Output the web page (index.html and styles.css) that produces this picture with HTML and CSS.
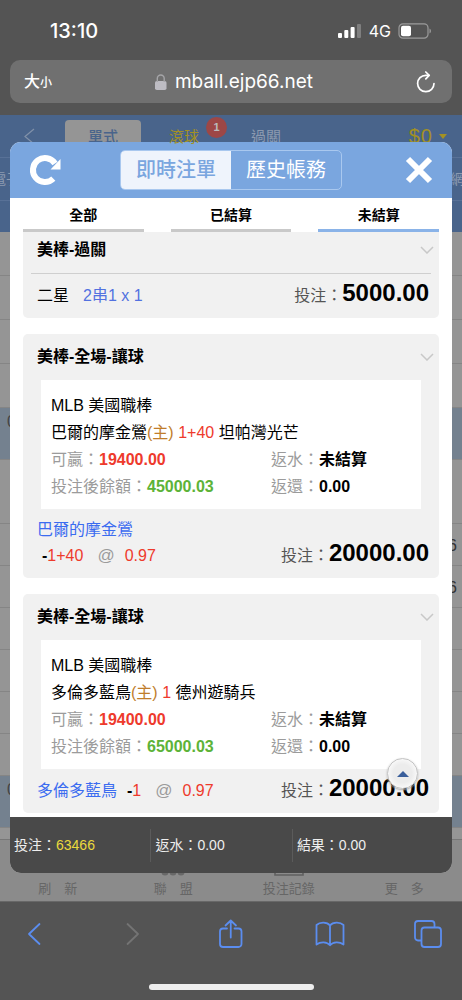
FILE: index.html
```html
<!DOCTYPE html>
<html lang="zh-Hant">
<head>
<meta charset="utf-8">
<meta name="viewport" content="width=device-width, initial-scale=1">
<title>即時注單</title>
<link rel="stylesheet" href="styles.css">
</head>
<body>
<header class="browser-top">
  <div class="status">
    <span class="clock">13:10</span>
    <div class="status-right">
      <svg width="24" height="16" viewBox="0 0 24 16" fill="#fff" aria-hidden="true"><rect x="0" y="10" width="4" height="5" rx="1"/><rect x="6.300" y="7" width="4" height="8" rx="1"/><rect x="12.600" y="4" width="4" height="11" rx="1"/><rect x="19" y="1" width="4" height="14" rx="1" opacity=".25"/></svg>
      <span class="network">4G</span>
      <svg width="34" height="16" viewBox="0 0 34 16" aria-hidden="true"><rect x="1" y=".8" width="29" height="14.400" rx="4" fill="none" stroke="#9b9b9b" stroke-width="1.200"/><rect x="3" y="2.800" width="10" height="10.400" rx="2" fill="#fff"/><path d="M31.500 5.500c2 1 2 4 0 5z" fill="#9b9b9b"/></svg>
    </div>
  </div>
  <div class="address">
    <button class="text-size" type="button">大<small>小</small></button>
    <div class="url">
      <svg width="12" height="16" viewBox="0 0 12 16" aria-hidden="true"><rect x="0" y="7" width="11.500" height="9" rx="1.800" fill="#bdbcc3"/><path d="M2.300 8V4.500a3.450 3.450 0 0 1 6.900 0V8" fill="none" stroke="#a5a5a8" stroke-width="1.400"/></svg>
      <span>mball.ejp66.net</span>
    </div>
    <button class="reload" type="button" aria-label="重新載入"><svg width="20" height="22" viewBox="0 0 20 22" fill="none" stroke="#fff" stroke-width="1.700" stroke-linecap="round" stroke-linejoin="round"><path d="M18 12.500a8.200 8.200 0 1 1-8.200-8.200h3"/><path d="M9.800 1l3.400 3.300-3.400 3.500"/></svg></button>
  </div>
</header>

<main class="stage">
  <div class="app" aria-hidden="true">
    <div class="app-nav">
      <svg width="11" height="17" viewBox="0 0 11 17" fill="none" stroke="#8191a9" stroke-width="1.200"><path d="M10 1L1 8.500l9 7.500"/></svg>
      <span class="app-tab on">單式</span>
      <span class="app-tab live">滾球<b class="badge">1</b></span>
      <span class="app-tab">過關</span>
      <span class="balance">$0<svg width="8" height="5" viewBox="0 0 8 5"><path d="M0 0h8L4 5z" fill="#a39123"/></svg></span>
    </div>
    <div class="app-sports"><span>電子</span><span>網球</span></div>
    <div class="app-strip"></div>
    <div class="rows">
      <div></div><div></div><div></div><div></div>
      <div class="blue"><span>0</span></div>
      <div class="tall"></div>
      <div class="odds"><span>6</span></div><div class="odds"><span>6</span></div><div></div><div></div><div></div><div></div>
      <div class="blue"><span>0</span></div>
    </div>
    <div class="app-foot">
      <span>刷　新</span>
      <span><svg width="24" height="8" viewBox="0 0 24 8" fill="#686868"><circle cx="4" cy="4" r="3.500"/><circle cx="12" cy="4" r="3.500"/><circle cx="20" cy="4" r="3.500"/></svg>聯　盟</span>
      <span><svg width="30" height="8" viewBox="0 0 30 8" fill="none" stroke="#606060" stroke-width="1.600"><path d="M1 0v7h28V0"/></svg>投注記錄</span>
      <span>更　多</span>
    </div>
  </div>

  <section class="modal" role="dialog" aria-label="即時注單">
    <div class="modal-head">
      <button type="button" aria-label="重新整理"><svg width="32" height="32" viewBox="0 0 32 32"><path d="M24.300 24.700A12 12 0 1 1 26 9.500" fill="none" stroke="#fff" stroke-width="6"/><path d="M31.500 5V15.500H21.500z" fill="#fff"/></svg></button>
      <div class="segment"><button class="on" type="button">即時注單</button><button type="button">歷史帳務</button></div>
      <button type="button" aria-label="關閉"><svg width="28" height="28" viewBox="0 0 28 28" fill="none" stroke="#fff" stroke-width="6"><path d="M3 3l22 22M25 3L3 25"/></svg></button>
    </div>
    <div class="filters">
      <button type="button">全部</button><button type="button">已結算</button><button class="on" type="button">未結算</button>
    </div>
    <div class="list">
      <article class="card first">
        <h2>美棒-過關<svg class="chev" width="14" height="8" viewBox="0 0 14 8"><path d="M1 1l6 6 6-6"/></svg></h2>
        <div class="summary ruled">
          <div class="picks"><span>二星</span><span class="parlay">2串1 x 1</span></div>
          <div class="stake">投注：<strong>5000.00</strong></div>
        </div>
      </article>
      <article class="card">
        <h2>美棒-全場-讓球<svg class="chev" width="14" height="8" viewBox="0 0 14 8"><path d="M1 1l6 6 6-6"/></svg></h2>
        <div class="detail">
          <p>MLB 美國職棒</p>
          <p>巴爾的摩金鶯<span class="home">(主)</span> <span class="red">1+40</span> 坦帕灣光芒</p>
          <div class="pair"><p>可贏：<b class="red">19400.00</b></p><p>返水：<b>未結算</b></p></div>
          <div class="pair"><p>投注後餘額：<b class="green">45000.03</b></p><p>返還：<b>0.00</b></p></div>
        </div>
        <div class="summary two-line">
          <div class="picks"><span class="team">巴爾的摩金鶯</span><span class="line"><b>-</b>1+40</span><span class="at">@</span><span class="red">0.97</span></div>
          <div class="stake">投注：<strong>20000.00</strong></div>
        </div>
      </article>
      <article class="card">
        <h2>美棒-全場-讓球<svg class="chev" width="14" height="8" viewBox="0 0 14 8"><path d="M1 1l6 6 6-6"/></svg></h2>
        <div class="detail">
          <p>MLB 美國職棒</p>
          <p>多倫多藍鳥<span class="home">(主)</span> <span class="red">1</span> 德州遊騎兵</p>
          <div class="pair"><p>可贏：<b class="red">19400.00</b></p><p>返水：<b>未結算</b></p></div>
          <div class="pair"><p>投注後餘額：<b class="green">65000.03</b></p><p>返還：<b>0.00</b></p></div>
        </div>
        <div class="summary">
          <div class="picks"><span class="team">多倫多藍鳥</span><span class="line"><b>-</b>1</span><span class="at">@</span><span class="red">0.97</span></div>
          <div class="stake">投注：<strong>20000.00</strong></div>
        </div>
      </article>
      <button class="to-top" type="button" aria-label="回頂端"><svg width="12" height="6" viewBox="0 0 12 6"><path d="M6 0l6 6H0z" fill="#3a5f9b"/></svg></button>
    </div>
    <footer class="totals">
      <div>投注：<span class="yellow">63466</span></div><div>返水：0.00</div><div>結果：0.00</div>
    </footer>
  </section>
</main>

<footer class="browser-bottom">
  <nav class="tools">
    <button type="button" aria-label="上一頁"><svg width="14" height="24" viewBox="0 0 14 24"><path d="M12.500 2L2 12l10.500 10"/></svg></button>
    <button class="off" type="button" aria-label="下一頁" disabled><svg width="14" height="24" viewBox="0 0 14 24"><path d="M1.500 2L12 12 1.500 22"/></svg></button>
    <button type="button" aria-label="分享"><svg width="24" height="30" viewBox="0 0 24 30"><path d="M8 9.500H4a3 3 0 0 0-3 3V25a3 3 0 0 0 3 3h15.500a3 3 0 0 0 3-3V12.500a3 3 0 0 0-3-3h-4M11.750 18.500V1.500M6.500 6.500l5.250-5 5.250 5"/></svg></button>
    <button type="button" aria-label="書籤"><svg width="30" height="26" viewBox="0 0 30 26"><path d="M15 4.500C12 .8 5 .8 1.500 4v19.500c4-3 10.500-3 13.500.800 3-3.800 9.500-3.800 13.500-.8V4C25 .8 18 .8 15 4.500zV24"/></svg></button>
    <button type="button" aria-label="分頁"><svg width="28" height="28" viewBox="0 0 28 28"><rect x="7.500" y="7.500" width="19.500" height="19.500" rx="3"/><path d="M7 20.500H4a3 3 0 0 1-3-3V4a3 3 0 0 1 3-3h13.500a3 3 0 0 1 3 3v3"/></svg></button>
  </nav>
  <div class="home-bar"></div>
</footer>
</body>
</html>
```
FILE: styles.css
```css
* { box-sizing: border-box; }
body {
  margin: 0;
  min-height: 100vh;
  display: flex;
  flex-direction: column;
  background: #545454;
  color: #000;
  font: 16px/27px "Liberation Sans", "Noto Sans CJK TC", sans-serif;
}
h2, p { margin: 0; }
button { margin: 0; padding: 0; border: 0; background: none; font: inherit; color: inherit; }
svg { display: block; flex: none; }

.browser-top { padding: 16px 10px 12px; color: #fff; font-family: Inter, "Noto Sans CJK TC", sans-serif; }
.status { display: flex; justify-content: space-between; align-items: center; height: 30px; padding: 0 20px 0 40px; }
.clock { font-size: 20px; font-weight: 500; }
.status-right { display: flex; align-items: center; gap: 7px; }
.network { font-size: 16px; }
.address { display: grid; grid-template-columns: 1fr auto 1fr; align-items: center; height: 43px; margin-top: 14px; padding: 0 16px 0 14px; border-radius: 10px; background: #707070; }
.text-size { justify-self: start; font-size: 16px; font-weight: 500; white-space: nowrap; }
.text-size small { font-size: 12px; }
.url { display: flex; align-items: center; gap: 8px; padding-left: 8px; font-size: 19px; }
.reload { justify-self: end; }

.stage { display: grid; flex: 1 0 auto; overflow: hidden; }
.app, .modal { grid-area: 1 / 1; min-width: 0; }
.app { display: flex; flex-direction: column; background: #959595; }
.app-nav { display: flex; align-items: center; height: 43px; padding: 0 15px 0 24px; background: #49648b; border-bottom: 1px solid #587197; color: #8c9ab0; font-size: 15px; }
.app-tab { padding: 0 26px; }
.app-tab.on { margin: 0 2px 0 30px; padding: 3px 23px; border-radius: 4px; background: #959595; color: #49648b; font-weight: 500; }
.app-tab.live { position: relative; color: #a39123; }
.badge { position: absolute; right: -2px; top: -6px; width: 21px; height: 21px; border-radius: 50%; background: #9d4746; color: #bbb; font-size: 11px; line-height: 21px; text-align: center; }
.balance { display: flex; align-items: center; gap: 6px; margin-left: auto; color: #a39123; font-size: 20px; letter-spacing: 1px; }
.app-sports { display: flex; justify-content: space-between; height: 43px; padding-top: 8px; background: #49648b; border-bottom: 1px solid #587197; color: #8c9ab0; font-size: 14px; }
.app-sports span { margin: 0 -16px 0 -8px; }
.app-strip { height: 31px; background: #49648b; }
.rows { flex: 1; padding-bottom: 10px; }
.rows > div { height: 44px; border-bottom: 1px solid #858585; }
.rows > .blue { height: 52px; padding-left: 7px; background: #74818f; color: #444; }
.rows > .tall { height: 64px; }
.rows > .tall ~ div { height: 42px; }
.rows > .tall ~ .blue { height: 52px; }
.rows > .odds { padding: 8px 5px 0 0; text-align: right; color: #333; }
.app-foot { display: grid; grid-template-columns: repeat(4, 1fr); align-items: end; height: 62px; background: #8b8b8b; border-top: 1px solid #777; color: #666; font-size: 13px; line-height: 25px; text-align: center; }
.app-foot span { display: flex; flex-direction: column; align-items: center; }

.modal { align-self: start; margin: 27px 10px 28px; border-radius: 11px; overflow: hidden; background: #fff; }
.modal-head { display: grid; grid-template-columns: 1fr auto 1fr; align-items: center; height: 56px; padding: 0 19px; background: #7aa6df; }
.modal-head > button:last-child { justify-self: end; }
.segment { display: grid; grid-template-columns: 1fr 1fr; width: 222px; height: 40px; border: 1px solid #a9c8ef; border-radius: 5px; overflow: hidden; color: #fff; font-size: 20px; }
.segment .on { background: #eff4fc; color: #7aa6df; font-weight: 500; }
.filters { display: grid; grid-template-columns: repeat(3, 1fr); gap: 27px; padding: 0 13px; font-size: 14px; font-weight: 700; }
.filters button { height: 34px; padding-top: 3px; border-bottom: 3px solid #c9c9c9; }
.filters .on { border-color: #8ab3e8; }
.list { position: relative; display: grid; gap: 16px; padding: 0 13px 4px; }
.card { padding: 9px 10px 9px 14px; border-radius: 5px; background: #f1f1f1; }
.card.first { padding-top: 4px; border-radius: 0 0 5px 5px; }
.card h2 { display: flex; justify-content: space-between; align-items: center; font-size: 16px; font-weight: 700; }
.chev { margin-right: -5px; fill: none; stroke: #c8c8c8; stroke-width: 1.5; }
.detail { margin: 10px 8px 8px 4px; padding: 12px 10px 9px; background: #fff; }
.detail p { white-space: nowrap; }
.pair { display: grid; grid-template-columns: 220px 1fr; color: #9b9b9b; }
.pair b { color: #000; }
.home { color: #c07d2b; }
.red, .pair .red { color: #ee3a2c; }
.pair .green { color: #5cb338; }
.summary { display: flex; justify-content: space-between; align-items: flex-end; }
.ruled { margin: 10px -2px 0 -6px; padding: 8px 2px 0 6px; border-top: 1px solid #cfcfcf; }
.picks { display: flex; flex-wrap: wrap; align-items: baseline; }
.parlay { margin-left: 14px; color: #5271e0; }
.team { color: #3b6cf0; }
.two-line { line-height: 26px; }
.two-line .team { flex-basis: 100%; }
.line { margin-left: 10px; color: #ee3a2c; }
.line b { color: #000; }
.two-line .line { margin-left: 5px; }
.at { margin: 0 10px 0 14px; color: #9b9b9b; font-size: 17px; line-height: 20px; }
.stake { flex: none; color: #555; white-space: nowrap; }
.stake strong { color: #000; font-size: 24px; line-height: 20px; }
.to-top { position: absolute; right: 34px; bottom: 28px; display: grid; place-items: center; width: 31px; height: 31px; border: 1px solid #c2c2c2; border-radius: 50%; background: radial-gradient(circle, #ececec 45%, #fafafa 75%); box-shadow: 0 1px 2px #aaa; }
.totals { display: grid; grid-template-columns: 32% 32% 1fr; align-items: center; height: 56px; background: #494949; color: #eee; font-size: 14px; }
.totals div { padding-left: 4px; line-height: 33px; border-right: 1px solid #5b5b5b; }
.totals div:last-child { border: 0; }
.yellow { color: #ead93c; }

.browser-bottom { height: 99px; padding: 12px 14px 10px; display: flex; flex-direction: column; justify-content: space-between; align-items: center; border-top: 1px solid #686868; }
.tools { display: flex; justify-content: space-between; align-self: stretch; height: 40px; }
.tools button { display: grid; place-items: center; width: 40px; }
.tools svg { fill: none; stroke: #5b8def; stroke-width: 1.8; stroke-linecap: round; stroke-linejoin: round; }
.tools .off svg { stroke: #747474; }
.home-bar { width: 165px; height: 6px; border-radius: 3px; background: #eee; }
```
